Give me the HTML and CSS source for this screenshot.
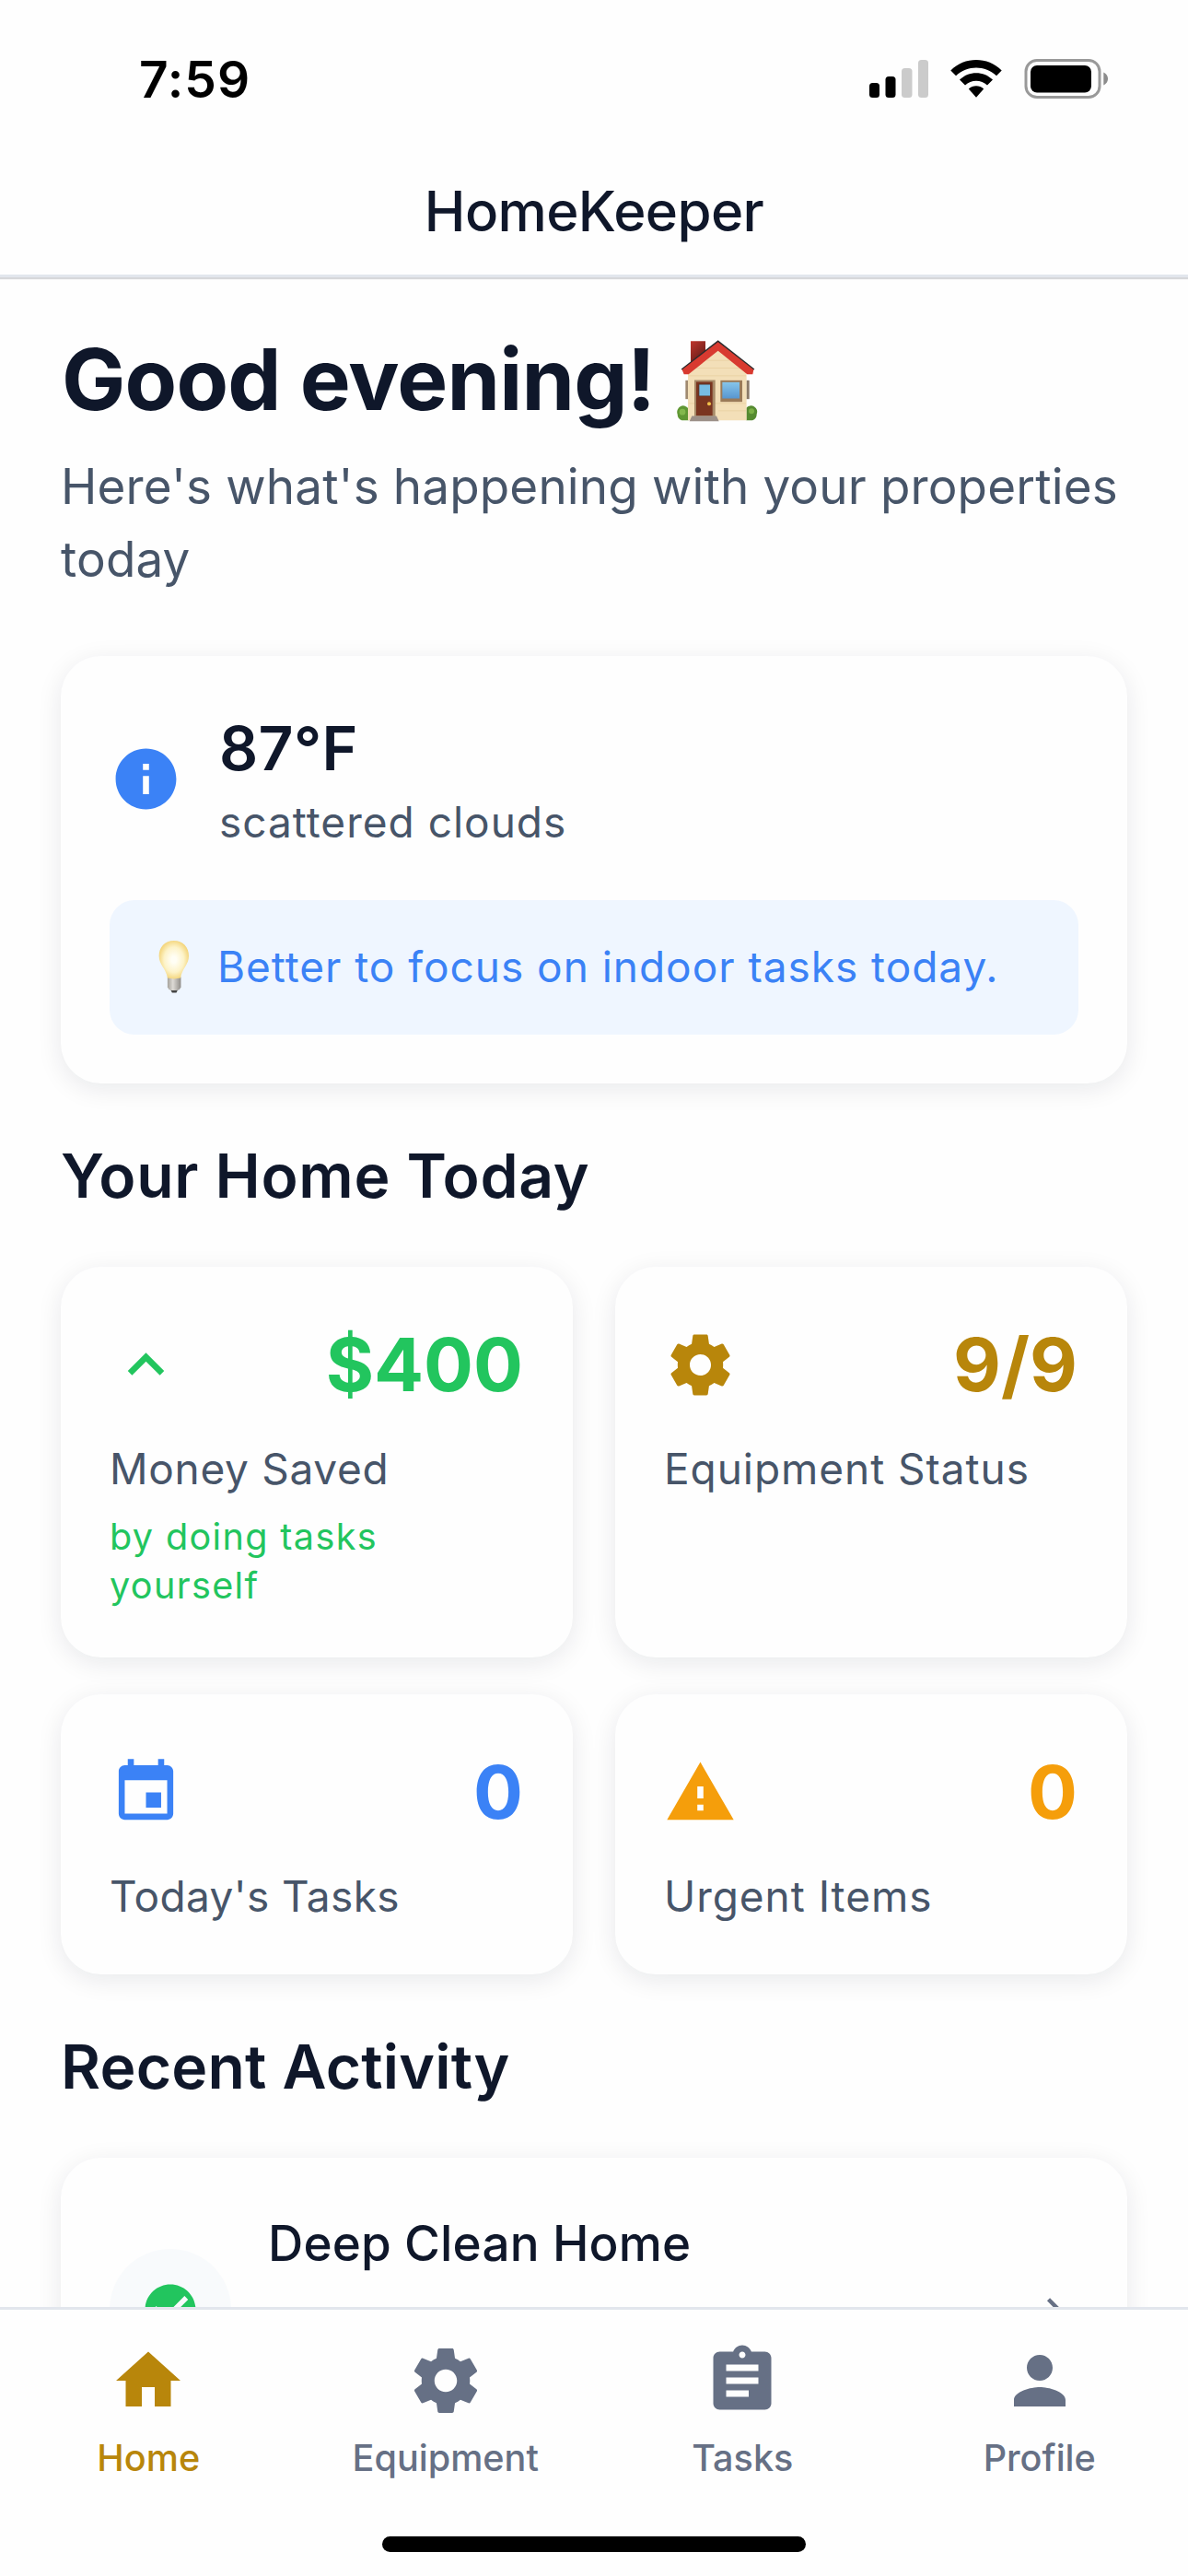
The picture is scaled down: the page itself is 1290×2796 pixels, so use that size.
FILE: index.html
```html
<!DOCTYPE html>
<html lang="en">
<head>
<meta charset="utf-8">
<title>HomeKeeper</title>
<link rel="stylesheet" href="styles.css">
</head>
<body>
<div class="app">
  <div class="status-bar">
    <span class="clock">7:59</span>
    <svg class="status-icons" viewBox="0 0 259 43" width="259" height="43">
      <rect x="0" y="26" width="11" height="16" rx="3.5"/>
      <rect x="17.5" y="19" width="11" height="23" rx="3.5"/>
      <rect x="35" y="10" width="11.500" height="32" rx="3.5" fill="#cbcbcb"/>
      <rect x="53" y="1" width="11" height="41" rx="3.5" fill="#cbcbcb"/>
      <path d="M88.300 12.500 C103.500 -2.800 128.500 -2.800 143.700 12.500 L138 18.300 C126 6.500 106 6.500 94 18.300 Z"/>
      <path d="M98 22.500 C108 12.700 124 12.700 134 22.500 L128 28.500 C121.500 22 110.500 22 104 28.500 Z"/>
      <path d="M107.800 32.500 C112.500 28.300 119.500 28.300 124.200 32.500 L116 41.800 Z"/>
      <rect x="170" y="1.500" width="80" height="40" rx="12" fill="none" stroke="#999" stroke-width="3"/>
      <rect x="175" y="7" width="66" height="29.500" rx="7"/>
      <path d="M254.300 14.500 c6.300 2.600 6.300 11.400 0 14 Z" fill="#8c8c8c"/>
    </svg>
  </div>
  <header class="header">HomeKeeper</header>

  <main class="content">
    <h1 class="greeting">
      <span>Good evening!</span>
      <svg class="house" viewBox="100 50 270 275" width="90" height="92">
        <defs>
          <linearGradient id="chimney" x1="0" y1="0" x2="0.600" y2="1"><stop offset="0" stop-color="#c0362c"/><stop offset="1" stop-color="#5e1a17"/></linearGradient>
          <linearGradient id="glass" x1="0" y1="0" x2="0" y2="1"><stop offset="0" stop-color="#86c5ea"/><stop offset="1" stop-color="#5896cf"/></linearGradient>
        </defs>
        <rect x="131" y="187" width="10" height="61" fill="#a08a70"/>
        <rect x="329" y="187" width="10" height="61" fill="#8a7a68"/>
        <path d="M148 59h48v50l-48 30z" fill="url(#chimney)"/>
        <path d="M105 298a20 21 0 0 1 36-18v37h-22q-14-4-14-19z" fill="#5f9733"/>
        <path d="M363 298a20 21 0 0 0-34-21v40h20q14-4 14-19z" fill="#558a30"/>
        <circle cx="121" cy="290" r="10" fill="#82b84c"/>
        <circle cx="346" cy="287" r="9" fill="#7bb046"/>
        <path d="M139 155L237 84l93 71v162H139z" fill="#f3dfb8"/>
        <path d="M200 122h75M160 147h150M143 172h185M143 262h185M238 286h90" stroke="#ead2a5" stroke-width="3"/>
        <path d="M117 150L237 56l119 94-6 6L237 70 123 156z" fill="#2b2b2d"/>
        <path d="M120 152L237 62l116 90-3 15h-18L237 91 141 167h-15z" fill="#d83a30"/>
        <rect x="160" y="186" width="68" height="118" fill="#a68a68"/>
        <rect x="166" y="192" width="53" height="110" fill="#7a3520"/>
        <rect x="173" y="198" width="39" height="41" fill="#5b3526"/>
        <rect x="176" y="201" width="35" height="36" fill="#77bde3"/>
        <circle cx="208" cy="263" r="6" fill="#f2c14b"/>
        <rect x="245" y="187" width="71" height="70" fill="#9a7a58"/>
        <rect x="251" y="193" width="56" height="53" fill="url(#glass)"/>
        <path d="M152 303h80l8 17h-96z" fill="#9c9088"/>
      </svg>
    </h1>
    <p class="subtitle">Here's what's happening with your properties today</p>

    <section class="card weather">
      <div class="weather-row">
        <svg class="icon blue" viewBox="0 0 24 24"><path d="M12 2C6.480 2 2 6.480 2 12s4.480 10 10 10 10-4.480 10-10S17.520 2 12 2zm1 15h-2v-6h2v6zm0-8h-2V7h2v2z"/></svg>
        <div class="weather-text">
          <div class="temperature">87°F</div>
          <div class="conditions">scattered clouds</div>
        </div>
      </div>
      <div class="tip">
        <svg class="bulb" viewBox="30 25 115 180" width="38" height="60">
          <defs>
            <radialGradient id="glow" cx="0.500" cy="0.500" r="0.550"><stop offset="0.150" stop-color="#fffef5"/><stop offset="0.600" stop-color="#fdf3c8"/><stop offset="1" stop-color="#f2d06e"/></radialGradient>
            <linearGradient id="metal"><stop offset="0" stop-color="#a5a29b"/><stop offset="0.400" stop-color="#dddad5"/><stop offset="1" stop-color="#8f8c88"/></linearGradient>
          </defs>
          <path d="M74 188h28l-7 13h-14z" fill="#444"/>
          <path d="M66 150h44v32q-2 9-12 12H78q-10-3-12-12z" fill="url(#metal)"/>
          <path d="M87 30C57 30 38 52 38 80c0 30 24 42 28 73q21 5 43 0c4-31 27-43 27-73 0-28-19-50-49-50z" fill="url(#glow)"/>
        </svg>
        <span>Better to focus on indoor tasks today.</span>
      </div>
    </section>

    <h2 class="section-title wide">Your Home Today</h2>
    <div class="stats">
      <section class="card stat">
        <div class="stat-head green">
          <svg class="icon" viewBox="0 0 24 24"><path d="M7.410 15.410L12 10.830l4.590 4.580L18 14l-6-6-6 6z"/></svg>
          <span class="value">$400</span>
        </div>
        <div class="label snug">Money Saved</div>
        <div class="note">by doing tasks yourself</div>
      </section>
      <section class="card stat">
        <div class="stat-head gold">
          <svg class="icon" viewBox="0 0 24 24"><path d="M19.430 12.980c.04-.32.07-.64.07-.98s-.03-.66-.07-.98l2.110-1.650c.19-.15.24-.42.12-.64l-2-3.460c-.12-.22-.39-.3-.61-.22l-2.490 1c-.52-.4-1.080-.73-1.690-.98l-.38-2.650C14.460 2.180 14.250 2 14 2h-4c-.25 0-.46.18-.49.42l-.38 2.650c-.61.25-1.170.59-1.690.98l-2.490-1c-.23-.09-.49 0-.61.22l-2 3.460c-.13.22-.07.49.12.64l2.110 1.650c-.04.32-.07.65-.07.98s.03.66.07.98l-2.110 1.650c-.19.15-.24.42-.12.64l2 3.460c.12.22.39.3.61.22l2.490-1c.52.4 1.080.73 1.690.98l.38 2.650c.03.24.24.42.49.42h4c.25 0 .46-.18.49-.42l.38-2.650c.61-.25 1.170-.59 1.690-.98l2.490 1c.23.09.49 0 .61-.22l2-3.460c.12-.22.07-.49-.12-.64l-2.110-1.650zM12 15.500c-1.930 0-3.500-1.570-3.500-3.500s1.570-3.500 3.500-3.500 3.500 1.570 3.500 3.500-1.570 3.500-3.500 3.500z"/></svg>
          <span class="value">9/9</span>
        </div>
        <div class="label">Equipment Status</div>
      </section>
      <section class="card stat">
        <div class="stat-head blue">
          <svg class="icon" viewBox="0 0 24 24"><path d="M17 12h-5v5h5v-5zM16 1v2H8V1H6v2H5c-1.110 0-1.990.9-1.990 2L3 19c0 1.100.89 2 2 2h14c1.100 0 2-.9 2-2V5c0-1.100-.9-2-2-2h-1V1h-2zm3 18H5V8h14v11z"/></svg>
          <span class="value">0</span>
        </div>
        <div class="label tight">Today's Tasks</div>
      </section>
      <section class="card stat">
        <div class="stat-head orange">
          <svg class="icon" viewBox="0 0 24 24"><path d="M1 21h22L12 2 1 21zm12-3h-2v-2h2v2zm0-4h-2v-4h2v4z"/></svg>
          <span class="value">0</span>
        </div>
        <div class="label">Urgent Items</div>
      </section>
    </div>

    <h2 class="section-title">Recent Activity</h2>
    <section class="card activity">
      <div class="badge">
        <svg viewBox="0 0 24 24" width="66" height="66"><path d="M12 2C6.480 2 2 6.480 2 12s4.480 10 10 10 10-4.480 10-10S17.520 2 12 2zm-2 15l-5-5 1.410-1.410L10 14.170l7.590-7.590L19 8l-9 9z"/></svg>
      </div>
      <div class="activity-text">
        <div class="activity-title">Deep Clean Home</div>
        <div class="activity-meta">Completed</div>
      </div>
      <svg class="chevron" viewBox="0 0 24 24" width="53" height="53"><path d="M8.590 16.590L13.170 12 8.590 7.410 10 6l6 6-6 6z"/></svg>
    </section>
  </main>

  <nav class="tab-bar">
    <div class="tabs">
      <div class="tab active">
        <svg viewBox="0 0 24 24" width="84" height="84"><path d="M10 20v-6h4v6h5v-8h3L12 3 2 12h3v8z"/></svg>
        <span>Home</span>
      </div>
      <div class="tab">
        <svg viewBox="0 0 24 24" width="84" height="84"><path d="M19.430 12.980c.04-.32.07-.64.07-.98s-.03-.66-.07-.98l2.110-1.650c.19-.15.24-.42.12-.64l-2-3.460c-.12-.22-.39-.3-.61-.22l-2.490 1c-.52-.4-1.080-.73-1.690-.98l-.38-2.650C14.460 2.180 14.250 2 14 2h-4c-.25 0-.46.18-.49.42l-.38 2.650c-.61.25-1.170.59-1.690.98l-2.490-1c-.23-.09-.49 0-.61.22l-2 3.460c-.13.22-.07.49.12.64l2.110 1.650c-.04.32-.07.65-.07.98s.03.66.07.98l-2.110 1.650c-.19.15-.24.42-.12.64l2 3.460c.12.22.39.3.61.22l2.490-1c.52.4 1.080.73 1.690.98l.38 2.650c.03.24.24.42.49.42h4c.25 0 .46-.18.49-.42l.38-2.650c.61-.25 1.170-.59 1.690-.98l2.490 1c.23.09.49 0 .61-.22l2-3.460c.12-.22.07-.49-.12-.64l-2.110-1.650zM12 15.500c-1.930 0-3.500-1.570-3.500-3.500s1.570-3.500 3.500-3.500 3.500 1.570 3.500 3.500-1.570 3.500-3.500 3.500z"/></svg>
        <span>Equipment</span>
      </div>
      <div class="tab">
        <svg viewBox="0 0 24 24" width="84" height="84"><path d="M19 3h-4.180C14.400 1.840 13.300 1 12 1c-1.300 0-2.400.84-2.820 2H5c-1.100 0-2 .9-2 2v14c0 1.100.9 2 2 2h14c1.100 0 2-.9 2-2V5c0-1.100-.9-2-2-2zm-7 0c.55 0 1 .45 1 1s-.45 1-1 1-1-.45-1-1 .45-1 1-1zm2 14H7v-2h7v2zm3-4H7v-2h10v2zm0-4H7V7h10v2z"/></svg>
        <span>Tasks</span>
      </div>
      <div class="tab">
        <svg viewBox="0 0 24 24" width="84" height="84"><path d="M12 12c2.210 0 4-1.790 4-4s-1.790-4-4-4-4 1.790-4 4 1.790 4 4 4zm0 2c-2.670 0-8 1.340-8 4v2h16v-2c0-2.660-5.330-4-8-4z"/></svg>
        <span>Profile</span>
      </div>
    </div>
    <div class="home-indicator"></div>
  </nav>
</div>
</body>
</html>
```
FILE: styles.css
```css
* { box-sizing: border-box; margin: 0; padding: 0; }

body {
  font-family: Inter, "Liberation Sans", sans-serif;
  color: #0f172a;
  background: #fefefe;
}

svg { display: block; flex: none; fill: currentColor; }

.app {
  display: flex;
  flex-direction: column;
  width: 1290px;
  height: 2796px;
  overflow: hidden;
}

.status-bar {
  flex: none;
  display: flex;
  justify-content: space-between;
  height: 177px;
  padding: 56px 87px 0 151px;
  color: #000;
}
.clock { font-size: 55px; font-weight: 600; line-height: 60px; letter-spacing: 1px; }
.status-icons { margin-top: 8px; }

.header {
  flex: none;
  height: 124px;
  padding-top: 16px;
  border-bottom: 3px solid #e2e6ed;
  box-shadow: 0 2px 1px #d6d7da;
  font-size: 60px;
  font-weight: 500;
  line-height: 72px;
  letter-spacing: -0.6px;
  text-align: center;
}

.content { flex: 1; min-height: 0; overflow: hidden; padding: 54px 66px 0; }

.greeting {
  display: flex;
  gap: 23px;
  padding-left: 1px;
  font-size: 92.4px;
  font-weight: 700;
  line-height: 112px;
  letter-spacing: -0.8px;
}
.house { margin-top: 12px; }

.subtitle {
  margin-top: 22px;
  font-size: 53px;
  line-height: 79px;
  letter-spacing: 0.14px;
  color: #475569;
}

.card {
  border-radius: 44px;
  background: #fefefe;
  box-shadow: 0 6px 28px rgba(16, 24, 40, 0.09);
}

.icon { width: 79px; height: 79px; }
.blue { color: #3b82f6; }
.green { color: #22c55e; }
.gold { color: #b8860b; }
.orange { color: #f59e0b; }

.weather { margin-top: 65px; padding: 53px; }
.weather-row { display: flex; align-items: center; gap: 40px; height: 160px; }
.weather-text { padding-top: 7px; }
.temperature { font-size: 66px; font-weight: 600; line-height: 80px; letter-spacing: 0.3px; }
.conditions { margin-top: 7px; font-size: 46px; line-height: 66px; letter-spacing: 1px; color: #475569; }
.tip {
  display: flex;
  align-items: center;
  gap: 28px;
  height: 146px;
  margin-top: 52px;
  padding: 0 51px 3px;
  border-radius: 27px;
  background: #eff6ff;
  color: #3b82f6;
  font-size: 46px;
  letter-spacing: 0.97px;
}

.section-title { margin-top: 60px; font-size: 66px; font-weight: 600; line-height: 80px; letter-spacing: 0.2px; }
.section-title.wide { letter-spacing: 0.7px; }

.stats {
  display: grid;
  grid-template-columns: 1fr 1fr;
  grid-template-rows: 424px 304px;
  gap: 40px 46px;
  margin-top: 59px;
}
.stat { padding: 53px; }
.stat-head { display: flex; align-items: center; justify-content: space-between; height: 106px; padding-right: 1px; }
.value { font-size: 80px; font-weight: 700; line-height: 106px; }
.label { margin-top: 28px; font-size: 46px; line-height: 65px; letter-spacing: 0.95px; color: #475569; }
.label.snug { letter-spacing: 0.7px; }
.label.tight { letter-spacing: 0.4px; }
.note { margin-top: 15px; font-size: 39.6px; line-height: 53px; letter-spacing: 1.35px; color: #22c55e; }

.activity { display: flex; align-items: center; gap: 40px; height: 330px; margin-top: 59px; padding: 0 53px; }
.badge {
  display: flex;
  align-items: center;
  justify-content: center;
  width: 132px;
  height: 132px;
  border-radius: 50%;
  background: #f8fafc;
  color: #22c55e;
}
.activity-text { flex: 1; height: 224px; }
.activity-title { font-size: 53px; font-weight: 500; line-height: 81px; letter-spacing: 0.14px; }
.activity-meta { margin-top: 12px; font-size: 46px; line-height: 66px; letter-spacing: 1px; color: #475569; }
.chevron { color: #667085; }

.tab-bar {
  flex: none;
  height: 292px;
  padding-top: 35px;
  border-top: 3px solid #e2e6ed;
  background: #fefefe;
}
.tabs { display: grid; grid-template-columns: repeat(4, 1fr); }
.tab {
  display: flex;
  flex-direction: column;
  align-items: center;
  gap: 18px;
  font-size: 39.6px;
  font-weight: 500;
  line-height: 48px;
  color: #667085;
}
.tab.active { color: #b8860b; }
.home-indicator { width: 460px; height: 17px; margin: 61px auto 0; border-radius: 9px; background: #000; }
```
